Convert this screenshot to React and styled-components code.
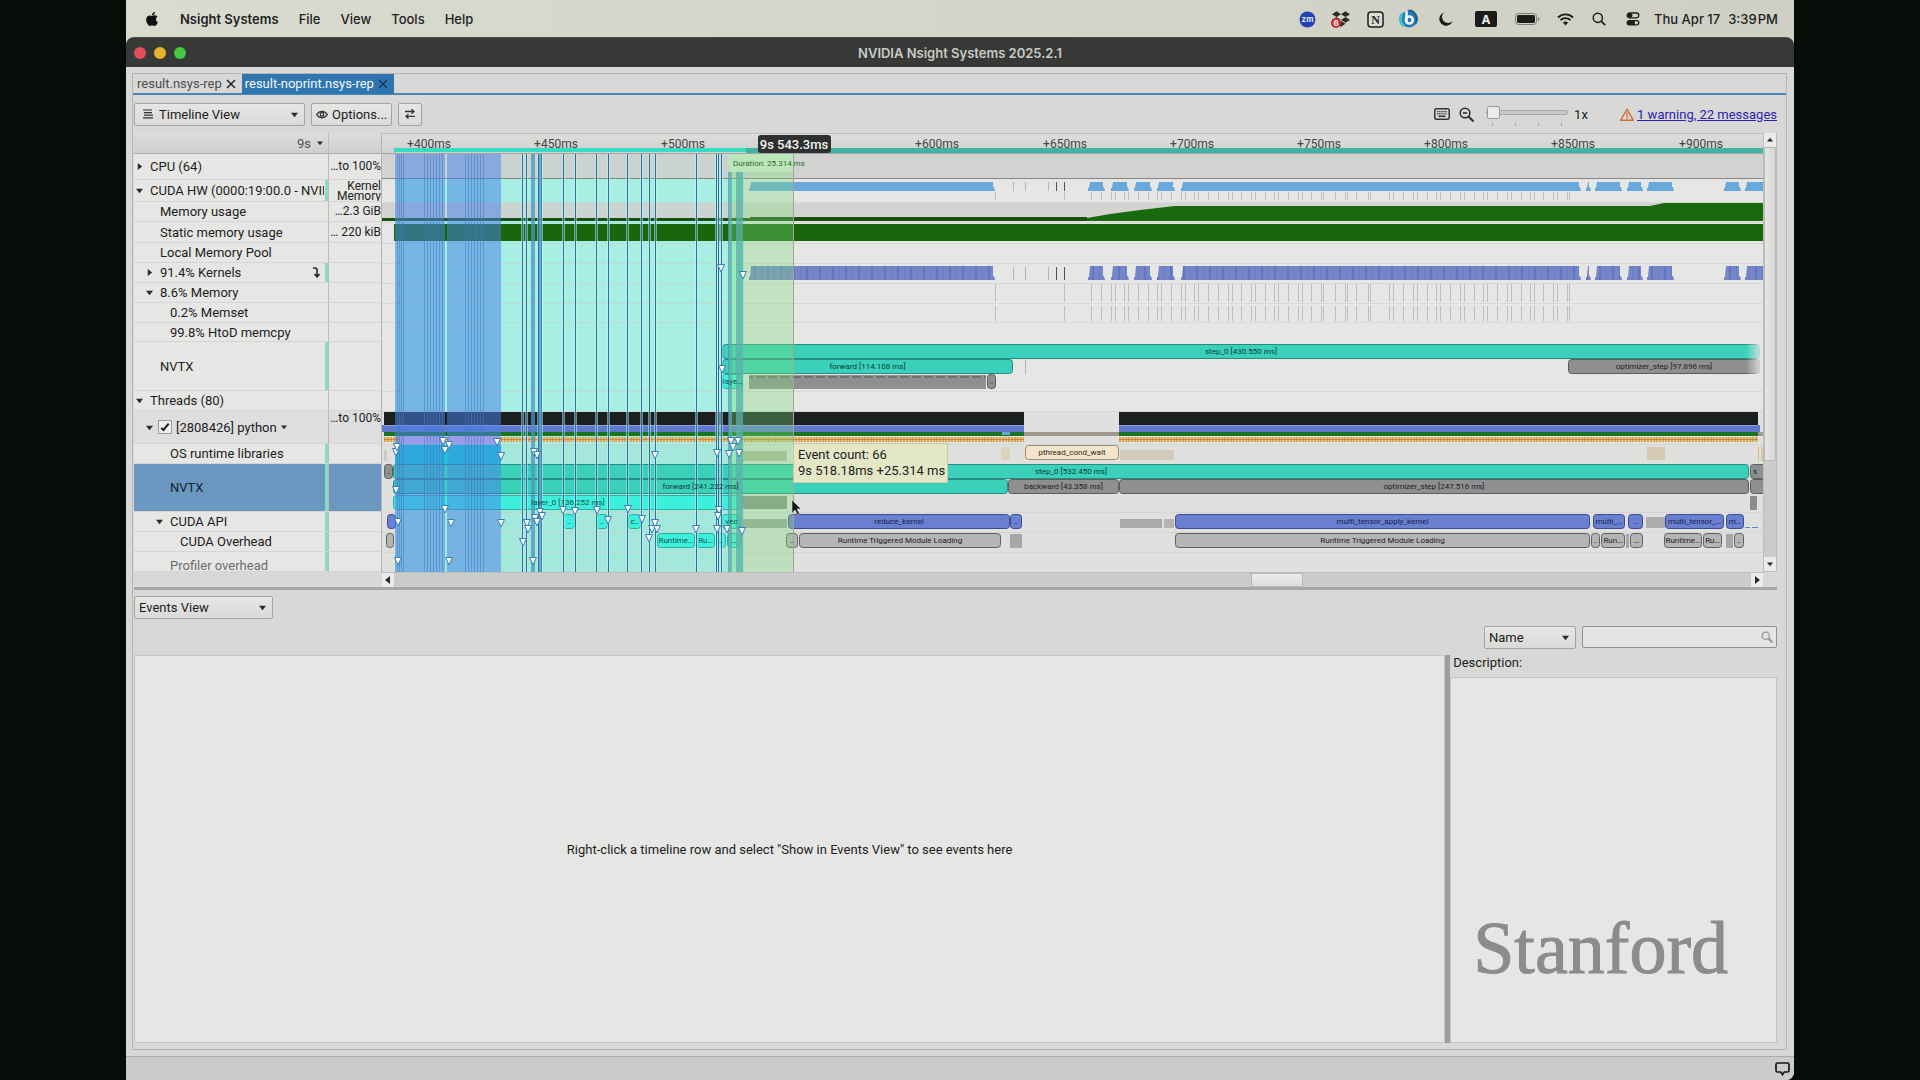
import React from "react";
import styled, { createGlobalStyle, css } from "styled-components";
import { FaApple, FaDropbox } from "react-icons/fa";

const ui = 'Roboto, "Liberation Sans", sans-serif';
const mac = 'Inter, "Liberation Sans", sans-serif';

const Global = createGlobalStyle`
  *, *::before, *::after { box-sizing: border-box; }
  body { margin: 0; background: #080c09; font-family: ${ui}; font-size: 13px; color: #1c1d1c; }
  button, select, input { font: inherit; color: inherit; }
`;

const Screen = styled.div`
  display: flex;
  flex-direction: column;
  min-height: 100vh;
  margin: 0 126px;
  background: #d8d8d6;
  border-bottom-right-radius: 8px;
  overflow: hidden;
`;

/* ---------- menu bar ---------- */

const MenuBar = styled.header`
  display: flex;
  align-items: center;
  height: 38px;
  padding: 0 16px 0 18px;
  background: linear-gradient(90deg, #dadbcf, #cfcfc4);
  font-family: ${mac};
  font-weight: 500;
  color: #22231f;
`;
const Menus = styled.nav`
  display: flex;
  align-items: center;
  gap: 20px;
  flex: 1;
`;
const MenuItem = styled.button`
  padding: 0;
  border: 0;
  background: none;
  font-weight: ${(p) => (p.$strong ? 600 : 500)};
`;
const StatusIcons = styled.div`
  display: flex;
  align-items: center;
`;
const StatusSlot = styled.span`
  display: flex;
  justify-content: center;
  position: relative;
  width: ${(p) => p.$w || 34}px;
`;
const BadgeLayer = styled.svg`
  position: absolute;
  top: 0;
`;
const Clock = styled.time`
  display: flex;
  gap: 8px;
  padding-left: 4px;
  white-space: nowrap;
`;

const TitleBar = styled.div`
  display: grid;
  grid-template-columns: 1fr auto 1fr;
  align-items: center;
  height: 29px;
  padding: 0 8px;
  border-radius: 8px 8px 0 0;
  background: #363935;
  box-shadow: 0 -1px 0 #4b4d48;
  color: #c9cac7;
  font-family: ${mac};
`;
const Lights = styled.div`
  display: flex;
  gap: 8px;
`;
const Light = styled.button`
  width: 12px;
  height: 12px;
  padding: 0;
  border: 0;
  border-radius: 50%;
  background: ${(p) => p.$c};
`;
const Title = styled.h1`
  margin: 0;
  font-size: 13px;
  font-weight: 600;
`;

/* ---------- window body ---------- */

const Frame = styled.main`
  display: flex;
  flex-direction: column;
  flex: 1;
  margin: 6px 7px 6px 6px;
  border: 1px solid #b4b5b4;
`;
const Tabs = styled.div`
  display: flex;
  height: 21px;
  padding-left: 1px;
  border-bottom: 2px solid #4a86b2;
`;
const Tab = styled.div`
  display: flex;
  align-items: center;
  gap: 4px;
  height: 20px;
  padding: 0 6px 0 3px;
  background: ${(p) => (p.$active ? "#2f76b0" : "transparent")};
`;
const TabButton = styled.button`
  padding: 0;
  border: 0;
  background: none;
  line-height: 20px;
  color: ${(p) => (p.$active ? "#f4f8fb" : "#4c4d4c")};
`;
const Bare = styled.button`
  display: flex;
  align-items: center;
  justify-content: center;
  padding: 0;
  border: 0;
  background: none;
`;

const Pane = styled.div`
  display: flex;
  flex-direction: column;
  flex: 1;
  padding: 0 9px 6px 1px;
`;
const Toolbar = styled.div`
  display: flex;
  align-items: center;
  gap: 6px;
  height: 38px;
`;
const raised = css`
  height: 23px;
  border: 1px solid #a3a4a3;
  border-radius: 2px;
  background: linear-gradient(#e6e6e5, #dadad9);
`;
const SelectBox = styled.label`
  display: flex;
  align-items: center;
  position: relative;
  width: ${(p) => p.$w}px;
  ${raised}
  & > svg { position: absolute; pointer-events: none; }
  & > svg:last-child { right: 6px; }
  & > svg:first-child:not(:last-child) { left: 8px; }
`;
const Select = styled.select`
  appearance: none;
  width: 100%;
  height: 100%;
  padding: 0 18px 0 ${(p) => (p.$icon ? 24 : 4)}px;
  border: 0;
  background: none;
`;
const ToolButton = styled.button`
  ${raised}
  display: flex;
  align-items: center;
  justify-content: center;
  gap: 4px;
  min-width: 24px;
  padding: 0 4px;
`;
const ToolbarRight = styled.div`
  display: flex;
  align-items: center;
  margin-left: auto;
`;
const ToolIcon = styled(Bare)`
  margin-left: 9px;
`;
const ZoomControl = styled.div`
  display: flex;
  flex-direction: column;
  gap: 4px;
  width: 82px;
  padding-top: 3px;
  margin: 0 6px 0 12px;
`;
const Slider = styled.input`
  appearance: none;
  width: 100%;
  height: 13px;
  margin: 0;
  background: none;
  &::-webkit-slider-runnable-track {
    height: 5px;
    border: 1px solid #a9a9a8;
    border-radius: 2px;
    background: #c9c9c8;
  }
  &::-webkit-slider-thumb {
    appearance: none;
    width: 13px;
    height: 13px;
    margin-top: -5px;
    border: 1px solid #999a99;
    border-radius: 2px;
    background: #ececeb;
  }
`;
const Ticks = styled.div`
  display: flex;
  justify-content: space-between;
  padding: 0 6px;
`;
const Tick = styled.i`
  width: 1px;
  height: 3px;
  background: #a0a1a0;
`;
const Messages = styled.a`
  margin-left: 3px;
  color: #2a22b4;
`;
const ZoomValue = styled.output`
  width: 46px;
`;

/* ---------- timeline ---------- */

const Timeline = styled.section`
  display: grid;
  grid-template-columns: 248px minmax(0, 1fr) 14px;
  border-bottom: 3px solid #a6a7a6;
`;
const Tree = styled.div`
  background: #e6e6e5;
  border-right: 1px solid #b2b3b2;
`;
const TreeRow = styled.div`
  display: grid;
  grid-template-columns: 195px 52px;
  grid-template-rows: 100%;
  height: ${(p) => p.$h}px;
  overflow: hidden;
  border-bottom: 1px solid ${(p) => (p.$header ? "#aaabaa" : "#d5d5d4")};
  background: ${(p) => (p.$header ? "linear-gradient(#dcdcdb,#cfcfce)" : p.$selected ? "#6b98c1" : p.$shade ? "#dedede" : "transparent")};
  color: ${(p) => (p.$dim ? "#6d6e6d" : p.$selected ? "#14222e" : "inherit")};
`;
const TreeCell = styled.div`
  display: flex;
  align-items: center;
  min-width: 0;
  padding-left: ${(p) => p.$level * 10}px;
  padding-right: 4px;
  padding-top: ${(p) => (p.$low ? 8 : 0)}px;
  border-right: 1px solid #b9bab9;
  box-shadow: ${(p) => (p.$mark ? "inset -3px 0 0 #86dcc9" : "none")};
  white-space: nowrap;
`;
const Twisty = styled.button`
  flex: none;
  display: flex;
  width: 16px;
  padding: 0 0 0 2px;
  border: 0;
  background: none;
`;
const TwistySpace = styled.span`
  flex: none;
  width: 16px;
`;
const RowName = styled.span`
  flex: 1;
  overflow: hidden;
`;
const HookIcon = styled.svg`
  margin-right: 4px;
`;
const HeaderUnit = styled.button`
  display: flex;
  align-items: center;
  gap: 6px;
  margin-left: auto;
  padding: 0 1px;
  border: 0;
  background: none;
  color: #505150;
`;
const CheckRow = styled.label`
  display: flex;
  align-items: center;
  gap: 4px;
  margin-left: -2px;
`;
const Check = styled.input`
  appearance: none;
  display: flex;
  align-items: center;
  justify-content: center;
  width: 14px;
  height: 14px;
  margin: 0;
  border: 1px solid #9c9d9c;
  background: #eeeeed;
  &:checked::after {
    content: "";
    width: 4px;
    height: 9px;
    margin-bottom: 2px;
    border: solid #1c1d1c;
    border-width: 0 2px 2px 0;
    transform: rotate(40deg);
  }
`;
const ValueCell = styled.div`
  align-self: ${(p) => (p.$top ? "start" : "center")};
  font-size: 12px;
  line-height: ${(p) => (p.$tight ? 10 : 15)}px;
  text-align: right;
  white-space: pre;
`;
const ChartArea = styled.div`
  position: relative;
  overflow: hidden;
`;
const Chart = styled.svg`
  display: block;
  width: 100%;
  height: 439px;
`;
const Tooltip = styled.div`
  position: absolute;
  left: 411px;
  top: 310px;
  padding: 3px 2px 3px 4px;
  border: 1px solid #c8cba8;
  background: #e4e7c6;
  line-height: 16px;
  white-space: nowrap;
`;
const VScroll = styled.div`
  display: flex;
  flex-direction: column;
  border: 1px solid #bcbdbc;
  border-width: 0 1px 1px;
  background: #cbcbca;
`;
const HScroll = styled.div`
  grid-column: 2;
  display: flex;
  height: 15px;
  border-top: 1px solid #bcbdbc;
  background: #cbcbca;
`;
const ScrollButton = styled(Bare)`
  flex: none;
  width: 12px;
  height: 14px;
  background: #ebebea;
`;
const ScrollGap = styled.div`
  flex: ${(p) => p.$grow};
`;
const Thumb = styled.div`
  flex: ${(p) => p.$grow};
  border: 1px solid #b8b9b8;
  background: ${(p) => (p.$v ? "linear-gradient(90deg,#e6e6e5,#d6d6d5)" : "linear-gradient(#ebebea,#dededd)")};
`;

/* ---------- events ---------- */

const EventsHead = styled.div`
  padding-top: 6px;
`;
const FilterRow = styled.div`
  display: flex;
  justify-content: flex-end;
  gap: 6px;
  padding: 7px 0 6px;
`;
const Search = styled.label`
  display: flex;
  align-items: center;
  width: 195px;
  height: 22px;
  padding-right: 3px;
  border: 1px solid #8f908f;
  border-radius: 2px;
  background: #e4e4e3;
`;
const SearchInput = styled.input`
  flex: 1;
  min-width: 0;
  height: 18px;
  border: 0;
  outline: 0;
  background: none;
`;
const Split = styled.div`
  display: grid;
  grid-template-columns: minmax(0, 1312fr) 5px minmax(0, 327fr);
  flex: 1;
`;
const EventsPanel = styled.section`
  display: flex;
  align-items: center;
  justify-content: center;
  border: 1px solid #c4c5c4;
  background: #e6e6e4;
`;
const Notice = styled.p`
  margin: 0;
`;
const Handle = styled.div`
  background: #9c9d9c;
`;
const Side = styled.section`
  display: flex;
  flex-direction: column;
`;
const SideTitle = styled.h2`
  margin: 0;
  padding: 0 3px;
  font-size: 13px;
  line-height: 15px;
  height: 22px;
  font-weight: 400;
`;
const Description = styled.div`
  display: flex;
  flex: 1;
  align-items: flex-end;
  padding: 0 22px 52px;
  border: 1px solid #c4c5c4;
  background: #e6e6e4;
`;
const Wordmark = styled.span`
  font-family: "Liberation Serif", serif;
  font-size: 74px;
  line-height: 84px;
  color: #8c8d8a;
  -webkit-text-stroke: 1px #8c8d8a;
`;
const StatusBar = styled.footer`
  display: flex;
  align-items: center;
  justify-content: flex-end;
  height: 24px;
  padding: 0 4px;
  border-top: 1px solid #a9aaa9;
  background: #cbcbcb;
`;

/* ---------- icons ---------- */

const Arrow = ({ dir = "down", size = 7 }) => {
  const d = { down: "M0 2h8L4 7z", up: "M0 6h8L4 1z", right: "M2 0v8l5-4z", left: "M6 0v8L1 4z" }[dir];
  return (
    <svg width={size} height={size} viewBox="0 0 8 8" fill="#2a2b2a" aria-hidden="true">
      <path d={d} />
    </svg>
  );
};
const Cross = ({ c = "#222" }) => (
  <svg width="10" height="10" viewBox="0 0 10 10" stroke={c} strokeWidth="1.5" aria-hidden="true">
    <path d="M1 1l8 8M9 1l-8 8" />
  </svg>
);
const LinesIcon = () => (
  <svg width="11" height="10" viewBox="0 0 11 10" stroke="#333" strokeWidth="1.2" aria-hidden="true">
    <path d="M0 1h9M1 3.6h8M1 6.2h9M0 8.8h10" />
  </svg>
);
const EyeIcon = () => (
  <svg width="12" height="9" viewBox="0 0 12 9" fill="none" stroke="#333" strokeWidth="1.3" aria-hidden="true">
    <path d="M.7 4.5C3 .2 9 .2 11.3 4.5 9 8.8 3 8.8 .7 4.5z" />
    <circle cx="6" cy="4.3" r="1.8" />
  </svg>
);
const SwapIcon = () => (
  <svg width="10" height="10" viewBox="0 0 10 10" fill="none" stroke="#333" strokeWidth="1.3" aria-hidden="true">
    <path d="M0 2.5h9M6.5 .3 9 2.5 6.5 4.7M10 7.3H1M3.5 5.2 1 7.3l2.5 2.3" />
  </svg>
);
const KeyboardIcon = () => (
  <svg width="16" height="12" viewBox="0 0 16 12" fill="none" stroke="#333" aria-hidden="true">
    <rect x=".8" y=".8" width="14.4" height="10.4" rx="1.5" strokeWidth="1.5" />
    <path d="M3 3.7h10M3 5.8h10" strokeWidth="1.3" strokeDasharray="1.3 .8" />
    <path d="M4.5 8.3h7" strokeWidth="1.5" />
  </svg>
);
const ZoomOutIcon = () => (
  <svg width="15" height="15" viewBox="0 0 15 15" fill="none" stroke="#2b2b2b" strokeWidth="1.5" aria-hidden="true">
    <circle cx="6" cy="6" r="4.8" />
    <path d="M9.5 9.5l5 5" strokeWidth="2" />
    <path d="M3.8 6h4.4" />
  </svg>
);
const WarnIcon = () => (
  <svg width="14" height="13" viewBox="0 0 14 13" fill="none" stroke="#cf6d33" strokeWidth="1.4" aria-hidden="true">
    <path d="M7 1 13.2 12.2H.8z" strokeLinejoin="round" />
    <path d="M7 4.5v4M7 9.6v1.3" />
  </svg>
);
const GlassIcon = () => (
  <svg width="12" height="12" viewBox="0 0 12 12" fill="none" stroke="#9a9b9a" aria-hidden="true">
    <circle cx="4.8" cy="4.8" r="3.6" strokeWidth="1.3" />
    <path d="M7.5 7.5l4 4" strokeWidth="2.2" />
  </svg>
);
const BubbleIcon = () => (
  <svg width="15" height="14" viewBox="0 0 15 14" fill="none" stroke="#161616" strokeWidth="1.7" aria-hidden="true">
    <path d="M2.5 1h10q1.5 0 1.5 1.5v6q0 1.5-1.5 1.5H9.3L7.5 12.6 5.7 10H2.5Q1 10 1 8.5v-6Q1 1 2.5 1z" />
  </svg>
);

const badgeText = { fontFamily: mac, fontWeight: 700, textAnchor: "middle" };
const ZoomApp = () => (
  <svg width="17" height="17" viewBox="0 0 17 17" aria-hidden="true">
    <circle cx="8.5" cy="8.5" r="8" fill="#2141b4" />
    <text x="8.5" y="11.3" fontSize="8" fill="#e8ecfa" {...badgeText}>zm</text>
  </svg>
);
const BoxApp = () => (
  <>
    <FaDropbox size={18} color="#2a2c28" />
    <BadgeLayer width="24" height="22" viewBox="0 0 24 22" aria-hidden="true">
      <circle cx="7" cy="13" r="5" fill="#c92a2f" />
      <text x="7" y="16" fontSize="8" fill="#fff" {...badgeText}>6</text>
    </BadgeLayer>
  </>
);
const NoteApp = () => (
  <svg width="17" height="17" viewBox="0 0 17 17" aria-hidden="true">
    <rect x="1" y="1" width="15" height="15" rx="3" fill="#dcddd3" stroke="#1e1f1c" strokeWidth="1.5" />
    <text x="8.5" y="12.8" fontSize="12" fill="#1e1f1c" fontWeight="700" textAnchor="middle" fontFamily="Liberation Serif">N</text>
  </svg>
);
const BApp = () => (
  <svg width="20" height="20" viewBox="0 0 20 20" fill="none" aria-hidden="true">
    <circle cx="10" cy="10" r="8.5" fill="#2577b6" />
    <path d="M9.5 1.5a8.5 8.5 0 0 1 7 13" stroke="#1d5f86" strokeWidth="2" />
    <path d="M3 5a8.5 8.5 0 0 0 2 12" stroke="#3cc0d6" strokeWidth="3" />
    <path d="M7.5 3v9" stroke="#f0f6f8" strokeWidth="2.6" strokeLinecap="round" />
    <circle cx="10.3" cy="11" r="3.5" stroke="#f0f6f8" strokeWidth="2.6" />
  </svg>
);
const MoonIcon = () => (
  <svg width="14" height="14" viewBox="0 0 14 14" fill="#1d1e1b" aria-hidden="true">
    <path d="M4.8 .5A6.8 6.8 0 1 0 13.5 9.2 6 6 0 0 1 4.8 .5z" />
  </svg>
);
const InputIcon = () => (
  <svg width="22" height="16" viewBox="0 0 22 16" aria-hidden="true">
    <rect width="22" height="16" rx="2" fill="#1b1c19" />
    <text x="11" y="12.5" fontSize="12" fill="#eeefe6" {...badgeText}>A</text>
  </svg>
);
const BatteryIcon = () => (
  <svg width="25" height="12" viewBox="0 0 25 12" fill="none" aria-hidden="true">
    <rect x=".5" y=".5" width="21" height="11" rx="3" stroke="#7c7d76" />
    <rect x="2" y="2" width="18" height="8" rx="1.5" fill="#1d1e1b" />
    <path d="M23 4v4q1.5-.6 1.5-2T23 4z" fill="#7c7d76" />
  </svg>
);
const WifiIcon = () => (
  <svg width="17" height="13" viewBox="0 0 17 13" fill="none" stroke="#1d1e1b" strokeWidth="1.9" aria-hidden="true">
    <path d="M1 4.5a10.6 10.6 0 0 1 15 0M3.5 7.2a7 7 0 0 1 10 0" />
    <path d="M8.5 12.5 5.9 9.6a3.8 3.8 0 0 1 5.2 0z" fill="#1d1e1b" stroke="none" />
  </svg>
);
const SearchIcon = () => (
  <svg width="14" height="14" viewBox="0 0 14 14" fill="none" stroke="#1d1e1b" strokeWidth="1.5" aria-hidden="true">
    <circle cx="5.8" cy="5.8" r="4.6" />
    <path d="M9.2 9.2l4 4" strokeWidth="1.8" />
  </svg>
);
const ControlIcon = () => (
  <svg width="14" height="14" viewBox="0 0 14 14" fill="none" aria-hidden="true">
    <rect x=".6" y="8" width="12.8" height="5.4" rx="2.7" fill="#1d1e1b" />
    <circle cx="10.3" cy="10.7" r="1.7" fill="#cfcfc4" />
    <rect x="1.2" y="1" width="11.6" height="4.8" rx="2.4" stroke="#1d1e1b" strokeWidth="1.3" />
    <circle cx="4" cy="3.4" r="2.4" fill="#1d1e1b" />
  </svg>
);

/* ---------- timeline data (chart units) ---------- */

const CHART = { x: 382, y: 133, w: 1381, h: 439 };
const RIGHT = CHART.x + CHART.w;

const ROWS = [
  { name: "CPU (64)", h: 26, level: 0, tw: "right", value: "…to 100%" },
  { name: "CUDA HW (0000:19:00.0 - NVID", h: 22, level: 0, tw: "down", value: "Kernel\nMemory", tight: true, mark: true },
  { name: "Memory usage", h: 20, level: 1, value: "…2.3 GiB" },
  { name: "Static memory usage", h: 21, level: 1, value: "… 220 kiB" },
  { name: "Local Memory Pool", h: 20, level: 1 },
  { name: "91.4% Kernels", h: 20, level: 1, tw: "right", mark: true, hook: true },
  { name: "8.6% Memory", h: 20, level: 1, tw: "down" },
  { name: "0.2% Memset", h: 20, level: 2 },
  { name: "99.8% HtoD memcpy", h: 19, level: 2 },
  { name: "NVTX", h: 49, level: 1, mark: true },
  { name: "Threads (80)", h: 20, level: 0, tw: "down" },
  { name: "[2808426] python", h: 33, level: 1, tw: "down", check: true, value: "…to 100%", top: true, shade: true },
  { name: "OS runtime libraries", h: 20, level: 2, mark: true },
  { name: "NVTX", h: 48, level: 2, selected: true, mark: true },
  { name: "CUDA API", h: 20, level: 2, tw: "down", mark: true },
  { name: "CUDA Overhead", h: 20, level: 3, mark: true },
  { name: "Profiler overhead", h: 20, level: 2, mark: true, dim: true, low: true },
];

const RULER = [
  [429, "+400ms"], [556, "+450ms"], [683, "+500ms"], [937, "+600ms"], [1065, "+650ms"],
  [1192, "+700ms"], [1319, "+750ms"], [1446, "+800ms"], [1573, "+850ms"], [1701, "+900ms"],
];
const LINES = [202, 222, 243, 263, 283, 303, 322, 391, 411, 444, 464, 512, 532, 552];
const BURSTS = [
  [749, 995], [1088, 1105], [1111, 1129], [1134, 1152], [1157, 1175], [1181, 1581], [1586, 1591],
  [1595, 1622], [1627, 1643], [1647, 1674], [1724, 1741], [1745, 1766],
];
const FAINT = [1013, 1025, 1048];
const DARK = [1056, 1064];
const COPIES = [
  995, 1064, 1091, 1101, 1111, 1115, 1124, 1128, 1138, 1148, 1157, 1161, 1171, 1181, 1185, 1194, 1198,
  1208, 1218, 1228, 1232, 1241, 1251, 1255, 1265, 1274, 1278, 1288, 1298, 1302, 1311, 1321, 1323, 1335,
  1345, 1347, 1356, 1368, 1370, 1389, 1393, 1403, 1413, 1417, 1427, 1436, 1440, 1450, 1460, 1464, 1474,
  1483, 1487, 1497, 1507, 1511, 1521, 1530, 1534, 1543, 1553, 1557, 1567, 1569,
];
const TONES = {
  teal: ["#3ad0ba", "#258d84", "#0e3d39"],
  cyan: ["#3df0dc", "#2cae9f", "#0e5650"],
  gray: ["#8e8f91", "#5c5d5e", "#1d1e1e"],
  light: ["#b4b5b4", "#5f605f", "#202120"],
  blue: ["#6a7fd0", "#3c4c8e", "#16204e"],
  sand: ["#f2e4cd", "#a08c6e", "#2c2820"],
};
/* x1, x2, y, tone, label, label centre */
const EVENTS = [
  [722, 1760, 345, "teal", "step_0 [430.550 ms]"],
  [722, 1013, 360, "teal", "forward [114.108 ms]"],
  [722, 743, 375, "cyan", "laye…"],
  [987, 996, 375, "gray", "‥"],
  [1568, 1760, 360, "gray", "optimizer_step [97.896 ms]"],
  [1025, 1119, 446, "sand", "pthread_cond_wait"],
  [384, 393, 465, "gray", "‥"],
  [393, 1749, 465, "teal", "step_0 [532.450 ms]"],
  [1750, 1766, 465, "gray", "s", 1755],
  [393, 1008, 480, "teal", "forward [241.222 ms]"],
  [1008, 1119, 480, "gray", "backward [43.358 ms]"],
  [1119, 1749, 480, "gray", "optimizer_step [247.516 ms]"],
  [1750, 1766, 480, "gray", ""],
  [393, 743, 496, "cyan", "layer_0 [136.252 ms]"],
  [387, 396, 515, "blue", ""],
  [563, 575, 515, "cyan", "‥"],
  [596, 608, 515, "cyan", "‥"],
  [628, 641, 515, "cyan", "c‥"],
  [722, 741, 515, "cyan", "vec"],
  [788, 1010, 515, "blue", "reduce_kernel"],
  [1010, 1022, 515, "blue", "‥"],
  [1175, 1590, 515, "blue", "multi_tensor_apply_kernel"],
  [1593, 1625, 515, "blue", "multi_…"],
  [1628, 1643, 515, "blue", "‥"],
  [1665, 1724, 515, "blue", "multi_tensor_…"],
  [1726, 1744, 515, "blue", "m…"],
  [386, 394, 534, "light", ""],
  [657, 695, 534, "cyan", "Runtime…"],
  [696, 715, 534, "cyan", "Ru…"],
  [716, 726, 534, "cyan", "‥"],
  [727, 741, 534, "cyan", "…"],
  [786, 798, 534, "light", "‥"],
  [799, 1001, 534, "light", "Runtime Triggered Module Loading"],
  [1175, 1590, 534, "light", "Runtime Triggered Module Loading"],
  [1591, 1600, 534, "light", "‥"],
  [1601, 1625, 534, "light", "Run…"],
  [1630, 1643, 534, "light", "…"],
  [1664, 1702, 534, "light", "Runtime…"],
  [1703, 1722, 534, "light", "Ru…"],
  [1734, 1744, 534, "light", "‥"],
];
/* x, y, width, height, colour */
const PATCHES = [
  [1001, 447, 9, 13, "#ddd3bd"], [1120, 450, 54, 10, "#d3ccbd"], [1647, 447, 18, 13, "#d5cab4"],
  [1758, 447, 1, 14, "#d8b77a"], [1761, 447, 2, 14, "#d8c49c"], [743, 451, 44, 10, "#b3b79d"],
  [384, 450, 3, 11, "#cfcbc0"], [743, 496, 44, 13, "#8b948a"], [743, 519, 44, 9, "#9ea69d"],
  [1750, 496, 7, 14, "#8b8c8b"], [1120, 519, 42, 9, "#a9aaa9"], [1164, 519, 10, 9, "#b4b5b4"],
  [1646, 517, 19, 11, "#acadac"], [1010, 534, 12, 14, "#a6a7a6"], [1626, 534, 3, 14, "#a6a7a6"],
  [1726, 534, 7, 14, "#a6a7a6"], [1745, 527, 5, 1, "#6a7fd0"], [1752, 527, 6, 1, "#6a7fd0"],
];
const BLUE_STRIPES = [
  397, 399, 401, 403, 424, 427, 430, 433, 436, 439, 442, 465, 468, 471, 474, 477, 480, 483,
];
const CURSORS = [522, 526, 538, 541, 563, 575, 596, 608, 627, 641, 649, 655, 696, 716, 718, 721];
const BANDS = [[531, 535], [539, 542], [728, 732], [736, 743]];
const MARKERS = [
  [396, 452], [397, 447], [443, 441], [445, 450], [449, 445], [497, 442], [501, 456], [534, 452], [537, 455],
  [655, 455], [717, 453], [731, 441], [738, 441], [733, 447], [729, 454], [739, 453], [396, 490], [445, 509],
  [398, 522], [451, 523], [501, 523], [527, 523], [528, 529], [535, 518], [537, 522], [540, 512], [542, 516],
  [523, 542], [563, 510], [575, 511], [597, 510], [608, 520], [628, 509], [642, 519], [655, 523], [652, 529],
  [657, 529], [649, 538], [696, 529], [719, 510], [718, 516], [717, 529], [727, 529], [742, 531], [398, 561],
  [449, 561], [533, 561], [721, 268], [743, 275], [722, 369],
];

const burst = ([a, b], y, h) => `M${a} ${y + h}v-3h1L${a + 2} ${y}H${b - 2}v${h - 4}h1L${b} ${y + h}z`;

function TimelineChart() {
  return (
    <Chart viewBox={`${CHART.x} ${CHART.y} ${CHART.w} ${CHART.h}`} preserveAspectRatio="xMinYMin slice" role="img" aria-label="Profiling timeline">
      <defs>
        <linearGradient id="ruler" x1="0" x2="0" y1="0" y2="1">
          <stop offset="0" stopColor="#dededd" />
          <stop offset="1" stopColor="#d0d0cf" />
        </linearGradient>
        <linearGradient id="fade">
          <stop offset="0" stopColor="#e6e6e5" stopOpacity="0" />
          <stop offset="1" stopColor="#e6e6e5" />
        </linearGradient>
        <pattern id="kernel" width="13" height="14" patternUnits="userSpaceOnUse">
          <rect width="13" height="14" fill="#7585c8" />
          <rect width="2" height="14" fill="#6575c2" />
          <rect x="7" width="1" height="14" fill="#6c7cc5" />
        </pattern>
        <pattern id="calls" width="3" height="5" x="0" y="437" patternUnits="userSpaceOnUse">
          <rect width="3" height="5" fill="#ead0a4" />
          <rect width="2" height="5" fill="#d6a65c" />
          <rect y="2" width="3" height="1" fill="#c98b33" />
        </pattern>
        <pattern id="layers" width="12" height="14" x="0" y="375" patternUnits="userSpaceOnUse">
          <rect width="12" height="14" fill="#8f9090" />
          <rect y="1" width="9" height="2" fill="#6f7070" />
        </pattern>
      </defs>

      <rect x={CHART.x} y="133" width={CHART.w} height="439" fill="#e6e6e5" />
      <rect x={CHART.x} y="411" width={CHART.w} height="161" fill="#e0e0df" />
      <rect x="395" y="154" width="349" height="418" fill="#a6efe2" />
      <rect x="395" y="444" width="349" height="128" fill="#a4e8dc" />
      {LINES.map((y) => (
        <rect key={y} x={CHART.x} y={y} width={CHART.w} height="1" fill="#c8cbc9" opacity=".5" />
      ))}
      <rect x={CHART.x} y="154" width={CHART.w} height="24" fill="#cfcfcd" opacity=".88" />
      <rect x={CHART.x} y="203" width={CHART.w} height="15" fill="#d0d0ce" opacity=".88" />
      <rect x={CHART.x} y="178" width={CHART.w} height="1" fill="#858685" />

      <path d="M382 218H1087L1110 214 1140 210 1175 206H1650L1664 203H1763V221H382z" fill="#1a680f" />
      <path d="M382 218H750V217H1087V221H382z" fill="#1a500f" />
      <rect x="394" y="224" width="1369" height="17" fill="#19660d" />

      {BURSTS.map((b) => (
        <g key={b[0]}>
          <path d={burst(b, 182, 9)} fill="#68a8db" />
          <path d={burst(b, 266, 14)} fill="url(#kernel)" />
        </g>
      ))}
      {[...FAINT, ...DARK].map((x) => (
        <g key={x} fill={DARK.includes(x) ? "#45526f" : "#b4b5b4"}>
          <rect x={x} y="182" width="1" height="9" />
          <rect x={x} y="267" width="1" height="13" />
        </g>
      ))}
      {COPIES.map((x) => (
        <g key={x} fill="#bcbdbc">
          <rect x={x} y="192" width="1" height="8" />
          <rect x={x} y="284" width="1" height="18" />
          <rect x={x} y="306" width="1" height="15" />
        </g>
      ))}
      <rect x="1025" y="360" width="1" height="14" fill="#b4b5b4" />
      <rect x="749" y="375" width="237" height="14" fill="url(#layers)" />

      {[[384, 1024], [1119, 1758]].map(([a, b]) => (
        <g key={a}>
          <rect x={a} y="412" width={b - a} height="13" fill="#1b1f1f" />
          <rect x={a - (a === 384 ? 2 : 0)} y="425" width={b - a + 2} height="7" fill="#6179cb" />
          <rect x={a} y="425" width={b - a} height="1" fill="#8fa0e0" />
          <rect x={a} y="432" width={b - a} height="4" fill="#177420" />
          <rect x={a} y="437" width={b - a} height="5" fill="url(#calls)" />
        </g>
      ))}
      <rect x="1024" y="432" width="95" height="4" fill="#a2968d" />
      <rect x="1002" y="432" width="8" height="3" fill="#6ea6cf" />
      <rect x="1758" y="432" width="5" height="4" fill="#a2968d" />

      {PATCHES.map(([x, y, w, h, c]) => (
        <rect key={`${x}-${y}`} x={x} y={y} width={w} height={h} fill={c} />
      ))}
      {EVENTS.map(([a, b, y, tone]) => (
        <rect key={`${a}-${y}`} x={a + 0.5} y={y - 0.5} width={b - a - 1} height="14" rx="3" fill={TONES[tone][0]} stroke={TONES[tone][1]} />
      ))}

      <rect x="395" y="445" width="106" height="19" fill="#12d2cf" />
      <rect x="395" y="154" width="50" height="418" fill="#4b82e8" opacity=".52" />
      <rect x="447" y="154" width="54" height="418" fill="#4b82e8" opacity=".52" />
      <rect x="400" y="436" width="44" height="8" fill="#979bea" />
      <rect x="449" y="436" width="50" height="8" fill="#979bea" />
      {BLUE_STRIPES.map((x) => (
        <rect key={x} x={x} y="154" width="1" height="418" fill="#3f78bd" opacity=".5" />
      ))}
      {CURSORS.map((x) => (
        <g key={x}>
          <rect x={x - 1} y="154" width="3" height="418" fill="#c4f2f2" opacity=".5" />
          <rect x={x} y="154" width="1" height="418" fill="#2f6f97" />
        </g>
      ))}
      {BANDS.map(([a, b]) => (
        <rect key={a} x={a} y={a > 700 ? 172 : 154} width={b - a} height={a > 700 ? 400 : 418} fill="#4a96c0" opacity=".75" />
      ))}
      <rect x="729" y="154" width="65" height="418" fill="#7fe07f" opacity=".34" />
      <rect x="729" y="154" width="65" height="18" fill="#c0ecc0" opacity=".7" />
      <rect x="793" y="154" width="1" height="418" fill="#a79f9a" />

      {EVENTS.map(([a, b, y, tone, label, mid]) => (
        <text key={`${a}-${y}`} x={mid || (a + b) / 2} y={y + 9} fontSize="8" textAnchor="middle" fill={TONES[tone][2]}>
          {label}
        </text>
      ))}
      {MARKERS.map(([x, y]) => (
        <path key={`${x}-${y}`} d={`M${x - 3.5} ${y - 3.5}h7l-3.5 7.5z`} fill="#f4fbff" stroke="#3a7dbb" />
      ))}
      <rect x="1746" y="340" width="17" height="36" fill="url(#fade)" />
      <text x="733" y="166" fontSize="8" fill="#2b6b2b">Duration: 25.314 ms</text>

      <rect x={CHART.x} y="133" width={CHART.w} height="21" fill="url(#ruler)" />
      <rect x={CHART.x} y="133" width={CHART.w} height="1" fill="#bdbebd" />
      <rect x="394" y="148" width="352" height="4" fill="#35dcc2" />
      <rect x="394" y="147" width="1" height="7" fill="#35dcc2" />
      <rect x="746" y="148" width={RIGHT - 746} height="5" fill="#3fb3a4" />
      <rect x={CHART.x} y="153" width={CHART.w} height="1" fill="#a3a5a4" />
      {RULER.map(([x, label]) => (
        <text key={label} x={x} y="148" fontSize="12" textAnchor="middle" fill="#444544">{label}</text>
      ))}
      <rect x="758" y="135" width="73" height="18" rx="3" fill="#2d302f" />
      <text x="794" y="149" fontSize="13" fontWeight="500" textAnchor="middle" fill="#f2f3f2">9s 543.3ms</text>
      <path d="M792 500v13l3-3 2.5 5 2-1-2.5-5h4z" fill="#111" stroke="#ddd" strokeWidth=".6" />
    </Chart>
  );
}

function Row({ r }) {
  return (
    <TreeRow $h={r.h} $selected={r.selected} $shade={r.shade} $dim={r.dim}>
      <TreeCell $level={r.level} $mark={r.mark} $low={r.low}>
        {r.tw ? <Twisty aria-label={`Toggle ${r.name}`}><Arrow dir={r.tw} /></Twisty> : <TwistySpace />}
        {r.check ? (
          <CheckRow>
            <Check type="checkbox" defaultChecked />
            {r.name}
            <Arrow size={6} />
          </CheckRow>
        ) : (
          <RowName>{r.name}</RowName>
        )}
        {r.hook && (
          <HookIcon width="8" height="11" viewBox="0 0 8 11" fill="none" stroke="#1b2a33" strokeWidth="1.6" aria-hidden="true">
            <path d="M1 1h2q2 0 2 2v6M2.5 7 5 9.8 7.5 7" />
          </HookIcon>
        )}
      </TreeCell>
      <ValueCell $tight={r.tight} $top={r.top}>{r.value}</ValueCell>
    </TreeRow>
  );
}

export default function App() {
  return (
    <>
      <Global />
      <Screen>
        <MenuBar>
          <Menus>
            <FaApple size={16} color="#111" />
            <MenuItem $strong>Nsight Systems</MenuItem>
            {["File", "View", "Tools", "Help"].map((m) => (
              <MenuItem key={m}>{m}</MenuItem>
            ))}
          </Menus>
          <StatusIcons>
            <StatusSlot><ZoomApp /></StatusSlot>
            <StatusSlot><BoxApp /></StatusSlot>
            <StatusSlot><NoteApp /></StatusSlot>
            <StatusSlot><BApp /></StatusSlot>
            <StatusSlot $w={40}><MoonIcon /></StatusSlot>
            <StatusSlot $w={40}><InputIcon /></StatusSlot>
            <StatusSlot $w={42}><BatteryIcon /></StatusSlot>
            <StatusSlot><WifiIcon /></StatusSlot>
            <StatusSlot><SearchIcon /></StatusSlot>
            <StatusSlot><ControlIcon /></StatusSlot>
          </StatusIcons>
          <Clock><span>Thu Apr 17</span><span>3:39{"\u200a"}PM</span></Clock>
        </MenuBar>
        <TitleBar>
          <Lights>
            <Light $c="#e0505a" aria-label="Close" />
            <Light $c="#e5b32c" aria-label="Minimize" />
            <Light $c="#46c843" aria-label="Zoom" />
          </Lights>
          <Title>NVIDIA Nsight Systems 2025.2.1</Title>
        </TitleBar>

        <Frame>
          <Tabs>
            <Tab>
              <TabButton>result.nsys-rep</TabButton>
              <Bare aria-label="Close result.nsys-rep"><Cross /></Bare>
            </Tab>
            <Tab $active>
              <TabButton $active>result-noprint.nsys-rep</TabButton>
              <Bare aria-label="Close result-noprint.nsys-rep"><Cross c="#173a5c" /></Bare>
            </Tab>
          </Tabs>

          <Pane>
            <Toolbar>
              <SelectBox $w={171}>
                <LinesIcon />
                <Select $icon aria-label="View"><option>Timeline View</option></Select>
                <Arrow />
              </SelectBox>
              <ToolButton><EyeIcon />Options...</ToolButton>
              <ToolButton aria-label="Swap"><SwapIcon /></ToolButton>
              <ToolbarRight>
                <Bare aria-label="Keyboard shortcuts"><KeyboardIcon /></Bare>
                <ToolIcon aria-label="Reset zoom"><ZoomOutIcon /></ToolIcon>
                <ZoomControl>
                  <Slider type="range" aria-label="Zoom" min="0" max="100" defaultValue="0" />
                  <Ticks><Tick /><Tick /><Tick /><Tick /></Ticks>
                </ZoomControl>
                <ZoomValue>1x</ZoomValue>
                <WarnIcon />
                <Messages href="#messages">1 warning, 22 messages</Messages>
              </ToolbarRight>
            </Toolbar>

            <Timeline>
              <Tree>
                <TreeRow $h={21} $header>
                  <TreeCell $level={0}>
                    <HeaderUnit>9s<Arrow size={6} /></HeaderUnit>
                  </TreeCell>
                </TreeRow>
                {ROWS.map((r, i) => (
                  <Row key={i} r={r} />
                ))}
              </Tree>
              <ChartArea>
                <TimelineChart />
                <Tooltip>
                  <div>Event count: 66</div>
                  <div>9s 518.18ms +25.314 ms</div>
                </Tooltip>
              </ChartArea>
              <VScroll>
                <ScrollButton aria-label="Scroll up"><Arrow dir="up" size={6} /></ScrollButton>
                <Thumb $v $grow={315} />
                <ScrollGap $grow={97} />
                <ScrollButton aria-label="Scroll down"><Arrow size={6} /></ScrollButton>
              </VScroll>
              <HScroll>
                <ScrollButton aria-label="Scroll left"><Arrow dir="left" size={8} /></ScrollButton>
                <ScrollGap $grow={858} />
                <Thumb $grow={50} />
                <ScrollGap $grow={448} />
                <ScrollButton aria-label="Scroll right"><Arrow dir="right" size={8} /></ScrollButton>
              </HScroll>
            </Timeline>

            <EventsHead>
              <SelectBox $w={139}>
                <Select aria-label="Lower view"><option>Events View</option></Select>
                <Arrow />
              </SelectBox>
            </EventsHead>
            <FilterRow>
              <SelectBox $w={92}>
                <Select aria-label="Filter column"><option>Name</option></Select>
                <Arrow />
              </SelectBox>
              <Search>
                <SearchInput type="search" aria-label="Search events" />
                <GlassIcon />
              </Search>
            </FilterRow>
            <Split>
              <EventsPanel>
                <Notice>Right-click a timeline row and select "Show in Events View" to see events here</Notice>
              </EventsPanel>
              <Handle />
              <Side>
                <SideTitle>Description:</SideTitle>
                <Description><Wordmark>Stanford</Wordmark></Description>
              </Side>
            </Split>
          </Pane>
        </Frame>
        <StatusBar>
          <Bare aria-label="Messages"><BubbleIcon /></Bare>
        </StatusBar>
      </Screen>
    </>
  );
}
